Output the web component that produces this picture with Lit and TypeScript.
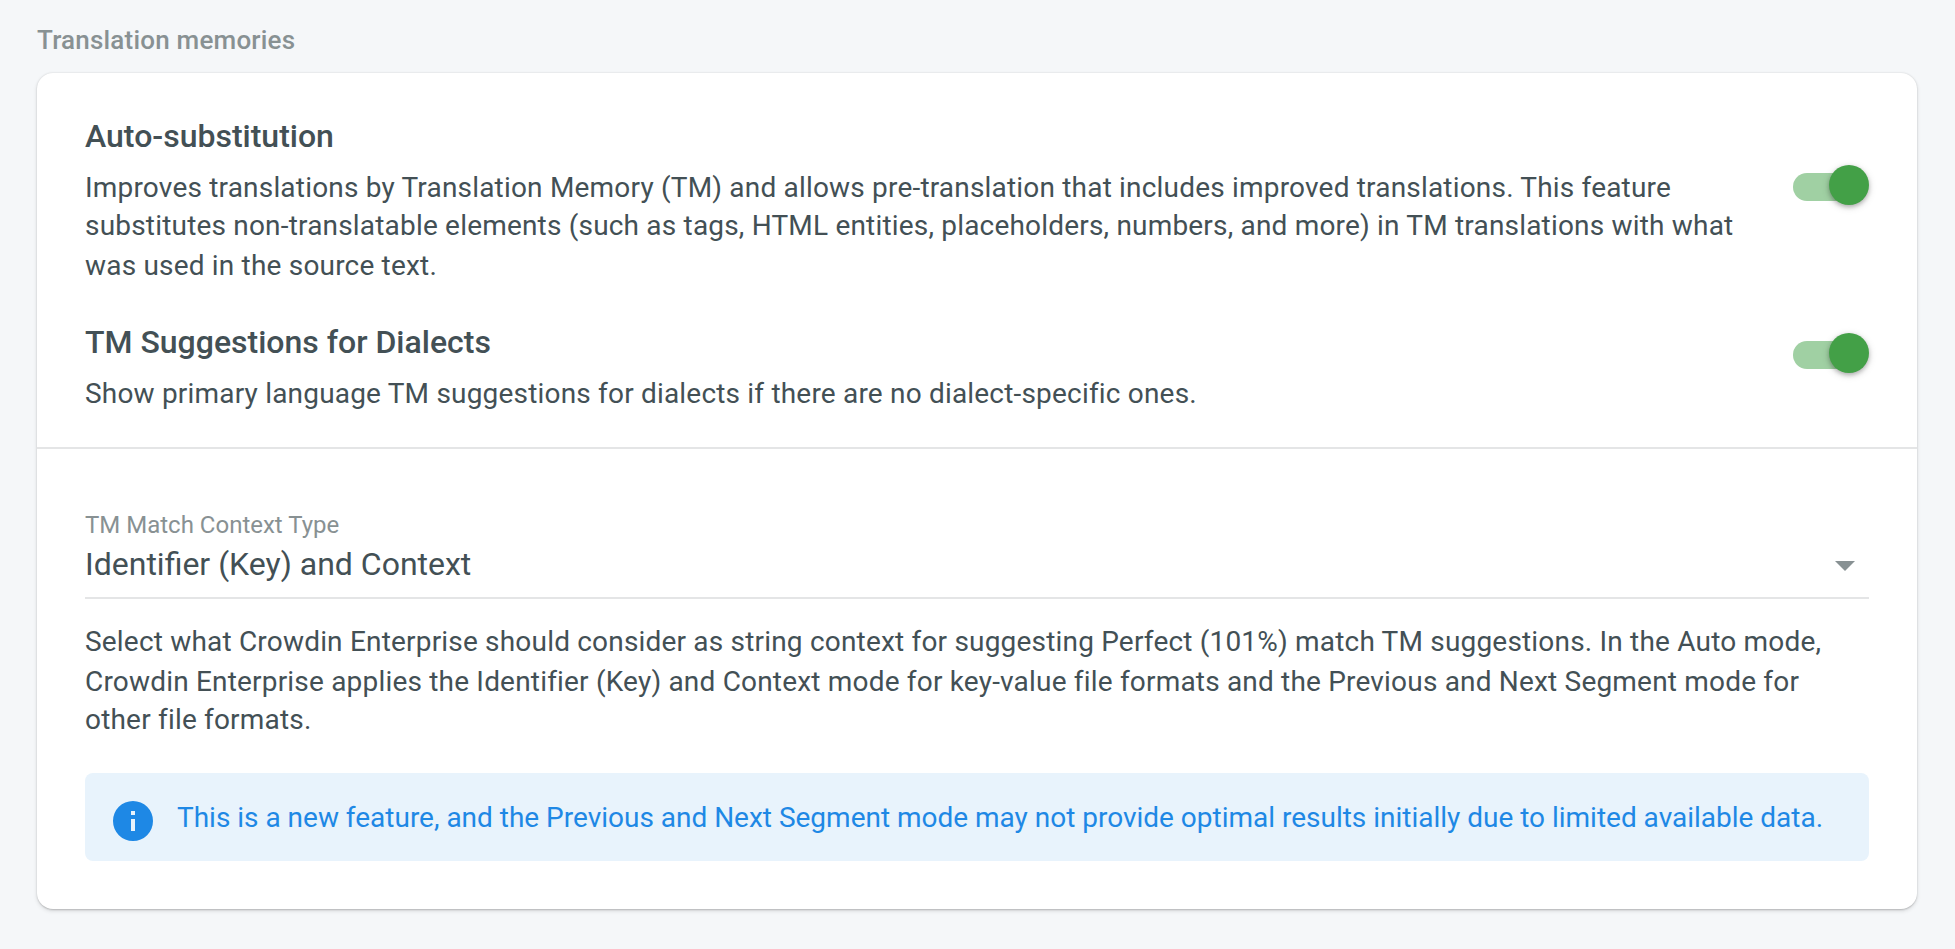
import { LitElement, html, css } from "lit";
import { customElement, property } from "lit/decorators.js";

@customElement("toggle-switch")
class ToggleSwitch extends LitElement {
  static styles = css`
    :host {
      display: grid;
      flex: none;
      width: 76px;
      height: 40px;
    }
    .track,
    .thumb {
      grid-area: 1 / 1;
    }
    .track {
      width: 72px;
      height: 28px;
      margin-top: 8px;
      border-radius: 14px;
      background: #a0d0a3;
    }
    .thumb {
      justify-self: end;
      width: 40px;
      height: 40px;
      border-radius: 50%;
      background: #43a047;
      box-shadow: 0 2px 4px rgba(0, 0, 0, 0.24), 0 2px 8px rgba(0, 0, 0, 0.14);
    }
  `;
  render() {
    return html`<div class="track"></div><div class="thumb"></div>`;
  }
}

@customElement("setting-row")
class SettingRow extends LitElement {
  @property() heading = "";
  @property({ attribute: false }) lines: string[] = [];
  static styles = css`
    :host {
      display: flex;
      justify-content: space-between;
      align-items: flex-start;
    }
    .title {
      margin: 0 0 12px;
      font-size: 32px;
      font-weight: 500;
      line-height: 40px;
    }
    .text {
      margin: 0;
      font-size: 28px;
      line-height: 39px;
      letter-spacing: 0.188px;
      white-space: nowrap;
    }
    .line {
      display: block;
    }
    .line:nth-child(2) {
      margin-top: -1px;
    }
    .line:nth-child(3) {
      margin-top: 1px;
    }
    .switch {
      margin-top: var(--switch-offset, 49px);
    }
  `;
  render() {
    return html`
      <div>
        <h3 class="title">${this.heading}</h3>
        <p class="text">${this.lines.map((l) => html`<span class="line">${l}</span>`)}</p>
      </div>
      <toggle-switch class="switch"></toggle-switch>
    `;
  }
}

@customElement("app-root")
class AppRoot extends LitElement {
  static styles = css`
    :host {
      display: block;
      box-sizing: border-box;
      height: 949px;
      padding: 24px 38px 0 37px;
      overflow: hidden;
      background: #f5f7f9;
      color: #435055;
      font-family: Roboto, sans-serif;
    }
    .section {
      margin: 0 0 17px;
      color: #889193;
      font-size: 26px;
      font-weight: 500;
      line-height: 32px;
      letter-spacing: 0.2px;
    }
    .card {
      border-radius: 16px;
      background: #fff;
      box-shadow: 0 0 2px rgba(0, 0, 0, 0.14), 0 2px 2px -1px rgba(0, 0, 0, 0.14),
        0 2px 4px rgba(0, 0, 0, 0.12);
    }
    .settings {
      display: flex;
      flex-direction: column;
      gap: 37px;
      padding: 43px 48px 34px;
      border-bottom: 2px solid #e4e5e6;
    }
    .dialects {
      --switch-offset: 11px;
    }
    .context {
      padding: 62px 48px 48px;
    }
    .label {
      color: #889193;
      font-size: 24px;
      line-height: 28px;
    }
    .select {
      display: flex;
      align-items: center;
      justify-content: space-between;
      padding: 5px 14px 13px 0;
      border-bottom: 2px solid #e4e5e6;
      font-size: 32px;
      line-height: 40px;
    }
    .caret {
      width: 20px;
      height: 10px;
      margin-top: 4px;
      fill: #889193;
    }
    .hint {
      margin: 23px 0 34px;
      font-size: 28px;
      line-height: 39px;
      letter-spacing: 0.188px;
      white-space: nowrap;
    }
    .line {
      display: block;
    }
    .line:nth-child(2) {
      margin-top: 1px;
    }
    .line:nth-child(3) {
      margin-top: -1px;
    }
    .notice {
      display: flex;
      align-items: flex-start;
      gap: 20px;
      box-sizing: border-box;
      height: 88px;
      padding: 24px;
      border-radius: 8px;
      background: #e8f3fc;
      color: #1e88e5;
    }
    .info {
      flex: none;
      width: 48px;
      height: 48px;
      fill: currentColor;
    }
    .message {
      margin-top: 1px;
      font-size: 28px;
      line-height: 39px;
      letter-spacing: -0.01px;
      white-space: nowrap;
    }
  `;

  render() {
    return html`
      <h2 class="section">Translation memories</h2>
      <div class="card">
        <div class="settings">
          <setting-row
            heading="Auto-substitution"
            .lines=${[
              "Improves translations by Translation Memory (TM) and allows pre-translation that includes improved translations. This feature",
              "substitutes non-translatable elements (such as tags, HTML entities, placeholders, numbers, and more) in TM translations with what",
              "was used in the source text.",
            ]}
          ></setting-row>
          <setting-row
            class="dialects"
            heading="TM Suggestions for Dialects"
            .lines=${[
              "Show primary language TM suggestions for dialects if there are no dialect-specific ones.",
            ]}
          ></setting-row>
        </div>
        <div class="context">
          <div class="label">TM Match Context Type</div>
          <div class="select">
            <span>Identifier (Key) and Context</span>
            <svg class="caret" viewBox="0 0 20 10"><path d="M0 0h20L10 10z" /></svg>
          </div>
          <p class="hint">
            <span class="line">Select what Crowdin Enterprise should consider as string context for suggesting Perfect (101%) match TM suggestions. In the Auto mode,</span>
            <span class="line">Crowdin Enterprise applies the Identifier (Key) and Context mode for key-value file formats and the Previous and Next Segment mode for</span>
            <span class="line">other file formats.</span>
          </p>
          <div class="notice">
            <svg class="info" viewBox="0 0 24 24">
              <path d="M12 2a10 10 0 1 0 0 20 10 10 0 0 0 0-20zm1 15h-2v-6h2zm0-8h-2V7h2z" />
            </svg>
            <span class="message">This is a new feature, and the Previous and Next Segment mode may not provide optimal results initially due to limited available data.</span>
          </div>
        </div>
      </div>
    `;
  }
}
